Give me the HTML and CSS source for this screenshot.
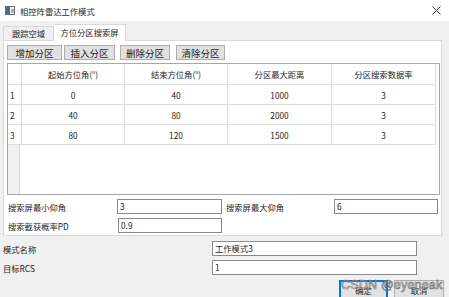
FILE: index.html
```html
<!DOCTYPE html>
<html lang="zh">
<head>
<meta charset="utf-8">
<title>相控阵雷达工作模式</title>
<link rel="stylesheet" href="styles.css">
</head>
<body>
<div class="window">
  <div class="titlebar">
    <svg class="appicon" width="10" height="9" viewBox="0 0 10 9">
      <rect x="0.5" y="0.5" width="9" height="8" fill="#f4f4f4" stroke="#6b6b6b"/>
      <rect x="1" y="1" width="4" height="7" fill="#4c6b86"/>
      <rect x="6" y="3" width="3" height="4" fill="#9fb6c8"/>
    </svg>
    <span class="title">相控阵雷达工作模式</span>
    <svg class="close" width="9" height="9" viewBox="0 0 9 9">
      <path d="M0.5 0.5 L8.5 8.5 M8.5 0.5 L0.5 8.5" stroke="#333" stroke-width="1"/>
    </svg>
  </div>

  <div class="tabs">
    <div class="tab">跟踪空域</div>
    <div class="tab active">方位分区搜索屏</div>
  </div>

  <div class="pane">
    <div class="toolbar">
      <button class="btn w55">增加分区</button>
      <button class="btn w51">插入分区</button>
      <button class="btn w50">删除分区</button>
      <button class="btn w49">清除分区</button>
    </div>

    <div class="grid">
      <table class="data">
        <thead>
          <tr><th class="rn"></th><th>起始方位角(°)</th><th>结束方位角(°)</th><th>分区最大距离</th><th>分区搜索数据率</th></tr>
        </thead>
        <tbody>
          <tr><td class="rn">1</td><td>0</td><td>40</td><td>1000</td><td>3</td></tr>
          <tr><td class="rn">2</td><td>40</td><td>80</td><td>2000</td><td>3</td></tr>
          <tr><td class="rn">3</td><td>80</td><td>120</td><td>1500</td><td>3</td></tr>
        </tbody>
      </table>
      <div class="filler"><div class="rnstrip"></div></div>
    </div>

    <div class="form">
      <label class="lbl">搜索屏最小仰角</label>
      <div class="field f1">3</div>
      <label class="lbl l2">搜索屏最大仰角</label>
      <div class="field f2">6</div>
      <label class="lbl">搜索截获概率PD</label>
      <div class="field f3">0.9</div>
    </div>
  </div>

  <div class="bottom">
    <div class="brow"><span class="blbl">模式名称</span><div class="field wide">工作模式3</div></div>
    <div class="brow"><span class="blbl">目标RCS</span><div class="field wide">1</div></div>
  </div>

  <div class="actions">
    <button class="btn act default">确定</button>
    <button class="btn act">取消</button>
  </div>

  <div class="watermark">CSDN @eyeneak</div>
</div>
</body>
</html>
```

FILE: styles.css
```css
html, body {
  margin: 0;
  padding: 0;
  width: 449px;
  height: 297px;
  overflow: hidden;
  background: #f0f0f0;
}

.window {
  position: relative;
  width: 449px;
  height: 297px;
  font-family: "Noto Sans CJK SC", "Noto Sans", sans-serif;
  font-size: 8px;
  color: #1e1e1e;
}

.titlebar {
  height: 21px;
  background: #ffffff;
  display: flex;
  align-items: center;
  padding-left: 5px;
  padding-right: 8px;
}

.appicon { flex: none; }

.title {
  margin-left: 5px;
  font-size: 8.3px;
  color: #2a2a2a;
  flex: 1;
}

.close { flex: none; }

.tabs {
  height: 19px;
  display: flex;
  align-items: flex-end;
  padding-left: 3px;
}

.tab {
  height: 13px;
  line-height: 12px;
  padding: 0 5px;
  width: 39px;
  background: #f0f0f0;
  border: 1px solid #d9d9d9;
  border-bottom: none;
  font-size: 8.3px;
  text-align: center;
}

.tab.active {
  width: 61px;
  height: 16px;
  line-height: 15px;
  background: #ffffff;
  border-left: none;
  margin-bottom: -1px;
  position: relative;
  z-index: 1;
}

.pane {
  margin-left: 3px;
  width: 439px;
  height: 196px;
  background: #ffffff;
  border: 1px solid #d9d9d9;
  padding: 4px 0 0 3px;
  box-sizing: border-box;
}

.toolbar {
  display: flex;
  height: 14px;
  gap: 0;
}

.btn {
  font-family: "Noto Sans CJK SC", "Noto Sans", sans-serif;
  font-size: 9.5px;
  color: #1e1e1e;
  background: #e1e1e1;
  border: 1px solid #adadad;
  padding: 0;
  height: 15px;
  line-height: 12px;
  margin: 0;
}

.w55 { width: 55px; }
.w51 { width: 51px; margin-left: 2px; }
.w50 { width: 50px; margin-left: 5px; }
.w49 { width: 49px; margin-left: 6px; }

.grid {
  margin-top: 4px;
  width: 433px;
  height: 132px;
  border: 1px solid #a8a8a8;
  box-sizing: border-box;
  background: #ffffff;
  display: flex;
  flex-direction: column;
}

.data {
  border-collapse: collapse;
  table-layout: fixed;
  width: 426px;
  flex: none;
}

.data th, .data td {
  border-right: 1px solid #dcdcdc;
  border-bottom: 1px solid #dcdcdc;
  text-align: center;
  font-weight: normal;
  padding: 0;
  font-size: 8.3px;
  white-space: nowrap;
}

.data th { height: 20px; }
.data td { height: 19px; }

.data th.rn, .data td.rn {
  width: 11px;
  text-align: left;
  padding-left: 2px;
}

.data th:nth-child(2), .data th:nth-child(3) { width: 102px; }
.data th:nth-child(4), .data th:nth-child(5) { width: 103px; }

.filler {
  flex: 1;
  display: flex;
}

.rnstrip {
  width: 11px;
  background: #f0f0f0;
  border-right: 1px solid #dcdcdc;
}

.form {
  margin-top: 4px;
  margin-left: 1px;
  display: grid;
  grid-template-columns: 109px 105px 112px 104px;
  row-gap: 4px;
  align-items: center;
}

.lbl {
  font-size: 8.3px;
  white-space: nowrap;
}

.l2 { padding-left: 4px; }

.field {
  height: 15px;
  box-sizing: border-box;
  border: 1px solid #8a8a8a;
  background: #ffffff;
  padding-left: 2px;
  line-height: 13px;
  font-size: 8.3px;
}

.f3 { margin-left: 1px; }

.bottom {
  margin-top: 5px;
  padding-left: 3px;
  display: flex;
  flex-direction: column;
  gap: 4px;
}

.brow {
  display: flex;
  align-items: center;
}

.blbl {
  width: 209px;
  font-size: 8.3px;
}

.field.wide { width: 205px; }

.actions {
  display: flex;
  justify-content: flex-end;
  padding-right: 5px;
  margin-top: 5px;
  gap: 6px;
}

.btn.act {
  width: 49px;
  height: 19px;
  line-height: 16px;
  font-size: 8.3px;
}

.btn.act + .btn.act { width: 50px; }

.btn.default {
  border: 1px solid #0078d7;
  box-shadow: inset 0 0 0 1px #0078d7;
}

.watermark {
  position: absolute;
  left: 341px;
  top: 278px;
  font-family: "Liberation Sans", Arial, sans-serif;
  font-size: 12.5px;
  color: rgba(255, 255, 255, 0.35);
  -webkit-text-stroke: 0.6px #6e6e6e;
  letter-spacing: 0.2px;
  white-space: nowrap;
}
```
